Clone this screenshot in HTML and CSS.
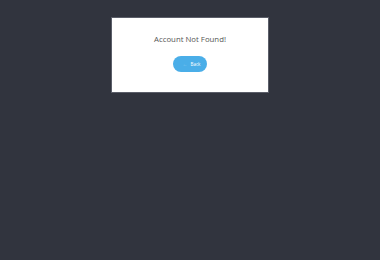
FILE: index.html
```html
<!DOCTYPE html>
<html>
<head>
<meta charset="utf-8">
<link rel="stylesheet" href="styles.css">
</head>
<body>
<div class="overlay">
  <div class="modal">
    <p class="title">Account Not Found!</p>
    <button class="back"><span class="icon">&#8592;</span><span>Back</span></button>
  </div>
</div>
</body>
</html>
```
FILE: styles.css
```css
html, body {
  margin: 0;
  padding: 0;
  width: 380px;
  height: 260px;
  background: #31343e;
  overflow: hidden;
}
.overlay {
  display: flex;
  justify-content: center;
  padding-top: 18px;
  height: 242px;
}
.modal {
  width: 156px;
  height: 74px;
  box-sizing: border-box;
  background: #ffffff;
  box-shadow: 0 0 0 1px rgba(120,124,135,0.6);
  display: flex;
  flex-direction: column;
  align-items: center;
  font-family: "Open Sans", sans-serif;
}
.title {
  margin: 16px 0 0 0;
  font-size: 7.8px;
  line-height: 11px;
  color: #555555;
}
.back {
  margin-top: 11px;
  width: 34px;
  height: 16px;
  border: none;
  border-radius: 8px;
  background: #4aaee8;
  color: #ffffff;
  font-family: "Open Sans", sans-serif;
  font-size: 4.5px;
  display: flex;
  align-items: center;
  justify-content: center;
  gap: 3px;
  padding: 0 0 0 3px;
}
.icon {
  color: rgba(255,255,255,0.35);
  font-size: 5px;
}
```
